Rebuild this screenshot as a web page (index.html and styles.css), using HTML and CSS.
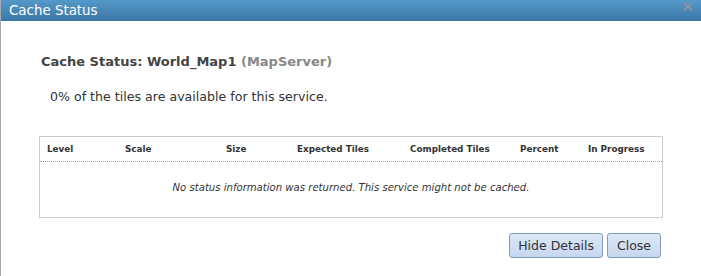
FILE: index.html
```html
<!DOCTYPE html>
<html>
<head>
<meta charset="utf-8">
<link rel="stylesheet" href="styles.css">
</head>
<body>
<div class="dialog">
  <div class="titlebar">
    <span class="title">Cache Status</span>
    <span class="close-x" aria-label="close">
      <svg width="12" height="11" viewBox="0 0 12 11"><path d="M2 1.5 L10 9.5 M10 1.5 L2 9.5" stroke="#8594a6" stroke-width="2" fill="none"/></svg>
    </span>
  </div>
  <div class="content">
    <h2 class="heading">Cache Status: World_Map1 <span class="type">(MapServer)</span></h2>
    <p class="summary">0% of the tiles are available for this service.</p>
    <div class="status-table">
      <div class="thead">
        <span>Level</span>
        <span>Scale</span>
        <span>Size</span>
        <span>Expected Tiles</span>
        <span>Completed Tiles</span>
        <span>Percent</span>
        <span>In Progress</span>
      </div>
      <div class="tbody">No status information was returned. This service might not be cached.</div>
    </div>
    <div class="actions">
      <button class="btn">Hide Details</button>
      <button class="btn btn-close">Close</button>
    </div>
  </div>
</div>
</body>
</html>
```
FILE: styles.css
```css
html, body {
  margin: 0;
  padding: 0;
  background: #fff;
}
.dialog {
  width: 701px;
  height: 276px;
  box-sizing: border-box;
  border-left: 1px solid #a8a8b0;
  font-family: "DejaVu Sans", Verdana, sans-serif;
  color: #333;
}
.titlebar {
  height: 21px;
  background: linear-gradient(#5499c9, #3a77a6);
  display: flex;
  align-items: center;
  justify-content: space-between;
  padding: 0 7px 0 8px;
}
.title {
  color: #fff;
  font-size: 13.4px;
  line-height: 21px;
}
.close-x {
  display: flex;
  margin-top: -8px;
}
.content {
  padding: 0 40px 0 38px;
}
.heading {
  margin: 32px 0 0 2px;
  font-size: 13px;
  font-weight: bold;
  color: #444;
  line-height: 18px;
}
.heading .type {
  color: #888;
}
.summary {
  margin: 18px 0 0 11px;
  font-size: 12.6px;
  line-height: 16px;
  color: #333;
}
.status-table {
  margin-top: 31px;
  border: 1px solid #c9cfd0;
  height: 82px;
  box-sizing: border-box;
  margin-right: -2px;
}
.thead {
  display: grid;
  grid-template-columns: 78px 101px 71px 113px 110px 68px 1fr;
  padding: 0 0 0 7px;
  height: 24px;
  align-items: center;
  border-bottom: 1px dotted #a99fb0;
  font-family: "DejaVu Sans", Tahoma, sans-serif;
  font-size: 8.8px;
  font-weight: bold;
  color: #333;
}
.tbody {
  text-align: center;
  font-style: italic;
  font-size: 10.1px;
  color: #333;
  padding-top: 20px;
}
.actions {
  display: flex;
  justify-content: flex-end;
  gap: 4px;
  margin-top: 15px;
}
.btn {
  font-family: "DejaVu Sans", Verdana, sans-serif;
  font-size: 12.5px;
  color: #333;
  height: 25px;
  padding: 0 8px;
  border: 1px solid #7f9cc0;
  border-radius: 3px;
  background: linear-gradient(#dde8f7, #c6d7ef);
}
.btn-close {
  min-width: 54px;
}
```
